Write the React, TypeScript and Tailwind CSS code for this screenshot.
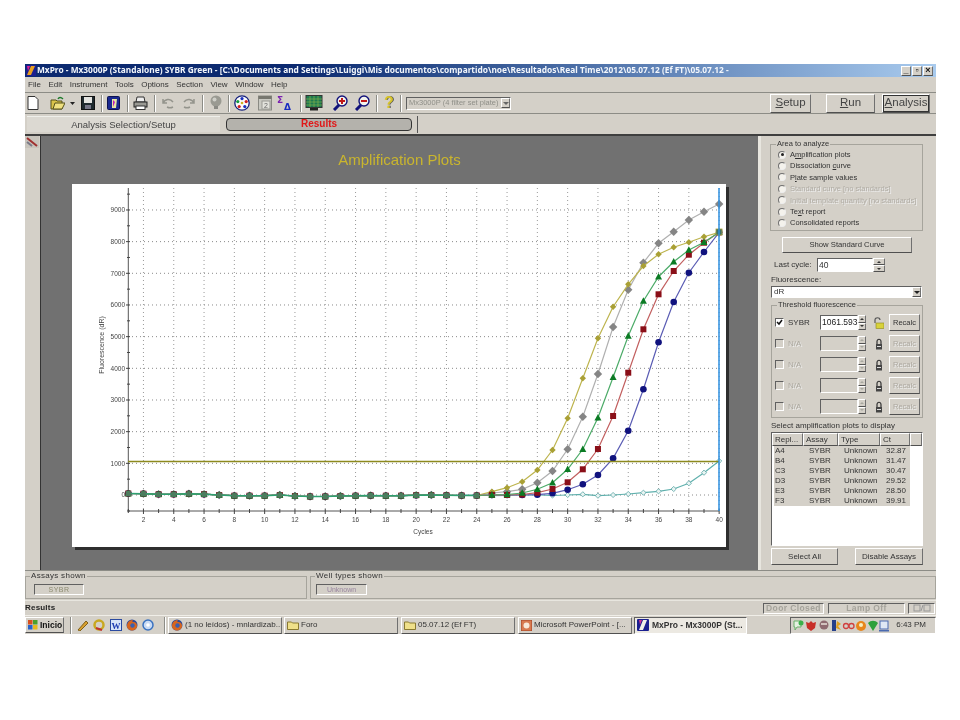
import React from "react";

const bevel = "border border-t-white border-l-white border-r-[#707070] border-b-[#505050]";
const sunken = "border border-t-[#606060] border-l-[#606060] border-r-white border-b-white";

const base = [493.5,493.7,494.3,494.3,493.8,494.2,495,495.7,495.7,495.7,495,496,496.5,496.5,496,495.7,495.5,495.7,495.7,495.2,495,495.3,495.5,495.5];
const series = [
  { k: "teal", line: "#5fb0ad", fill: "#e8f4f2", stroke: "#5aa5a5", m: "open", d: [495.5,495.5,495.2,495,495.7,495.3,495,495,495.5,495,494.3,495.7,495,494,492.7,491.3,489,483.3,472.7,461], from: 21 },
  { k: "gray", line: "#b0b0b0", fill: "#858585", stroke: "#858585", m: "diamond", d: [493,491.7,489.3,482.7,471,449.3,416.7,374,327,289.7,262.7,243.3,231.7,220,211.7,204], from: 25 },
  { k: "olive", line: "#bdb44e", fill: "#a9a035", stroke: "#a9a035", m: "small", d: [491.7,487.7,481.7,470,450,418.3,378.3,338.3,306.7,284.3,266,254.3,247.3,242.3,236.7,232.3], from: 25 },
  { k: "navy", line: "#5a5cb4", fill: "#10127e", stroke: "#10127e", m: "circle", d: [495,495,495,494.7,493.3,489.7,484.3,475,458.3,430.7,389.3,342.3,302,272.7,252,232.3], from: 25 },
  { k: "red", line: "#c25f5f", fill: "#8a0f18", stroke: "#8a0f18", m: "square", d: [495,495,494.5,492.7,489,482.3,469.3,449,416,372.7,329.3,294.3,271,254.7,242.7,232.3], from: 25 },
  { k: "green", line: "#4cab68", fill: "#0b7b24", stroke: "#0b7b24", m: "tri", d: [495,494.5,493,489.3,482.7,469.3,449.3,417.7,377.3,336,301,276.7,261.7,250,242.3,232.3], from: 25 },
];
const cx = (c: number) => 128.3 + (c - 1) * 15.15;
const yOf = (v: number) => 495 - v * 0.03167;

function Marker({ kind, x, y, fill, stroke }: { kind: string; x: number; y: number; fill: string; stroke: string }) {
  if (kind === "diamond") return <polygon points={`${x},${y - 4.2} ${x + 4.2},${y} ${x},${y + 4.2} ${x - 4.2},${y}`} fill={fill} />;
  if (kind === "small") return <polygon points={`${x},${y - 3.2} ${x + 3.2},${y} ${x},${y + 3.2} ${x - 3.2},${y}`} fill={fill} />;
  if (kind === "circle") return <circle cx={x} cy={y} r={3.3} fill={fill} />;
  if (kind === "square") return <rect x={x - 3} y={y - 3} width={6} height={6} fill={fill} />;
  if (kind === "tri") return <polygon points={`${x},${y - 3.8} ${x + 3.5},${y + 2.7} ${x - 3.5},${y + 2.7}`} fill={fill} />;
  return <polygon points={`${x},${y - 2.6} ${x + 2.6},${y} ${x},${y + 2.6} ${x - 2.6},${y}`} fill={fill} stroke={stroke} strokeWidth={0.8} />;
}

function Chart() {
  const ticksY = [0, 1000, 2000, 3000, 4000, 5000, 6000, 7000, 8000, 9000];
  const evens = Array.from({ length: 20 }, (_, i) => (i + 1) * 2);
  const all = Array.from({ length: 40 }, (_, i) => i + 1);
  const dotStyle = { font: "6.5px 'Liberation Sans', sans-serif" };
  return (
    <svg viewBox="72 184 654 363" width={654} height={363} className="block bg-white">
      {evens.map((c) => (
        <line key={c} x1={cx(c)} x2={cx(c)} y1={188} y2={511} stroke="#9a9a9a" strokeWidth={1} strokeDasharray="1 3" />
      ))}
      {ticksY.map((v) => (
        <line key={v} x1={128} x2={719} y1={yOf(v)} y2={yOf(v)} stroke="#8a8a8a" strokeWidth={1} strokeDasharray="1 3" />
      ))}
      <line x1={128.3} x2={128.3} y1={188} y2={511} stroke="#555" strokeWidth={1} />
      <line x1={128} x2={719} y1={511} y2={511} stroke="#555" strokeWidth={1} />
      {all.map((c) => (
        <line key={c} x1={cx(c)} x2={cx(c)} y1={509} y2={c % 2 === 0 ? 514 : 513} stroke="#444" strokeWidth={1} />
      ))}
      {Array.from({ length: 20 }, (_, i) => i).map((i) => (
        <line key={i} x1={i % 2 === 0 ? 126 : 127} x2={130} y1={495 - i * 15.835} y2={495 - i * 15.835} stroke="#444" strokeWidth={1} />
      ))}
      <line x1={127} x2={130} y1={511} y2={511} stroke="#444" strokeWidth={1} />
      {ticksY.map((v) => (
        <text key={v} x={125} y={yOf(v) + 2.3} textAnchor="end" fill="#444" style={dotStyle}>{v}</text>
      ))}
      {evens.map((c) => (
        <text key={c} x={cx(c)} y={522} textAnchor="middle" fill="#444" style={dotStyle}>{c}</text>
      ))}
      <text x={423} y={534} textAnchor="middle" fill="#444" style={dotStyle}>Cycles</text>
      <text transform="rotate(-90 104 345)" x={104} y={345} textAnchor="middle" fill="#444" style={{ font: "7px 'Liberation Sans', sans-serif" }}>Fluorescence (dR)</text>
      {series.map((s) => {
        const head = base.slice(0, s.from - 1);
        const ys = [...head, ...s.d];
        return (
          <g key={s.k}>
            <polyline points={ys.map((y, i) => `${cx(i + 1)},${y}`).join(" ")} fill="none" stroke={s.line} strokeWidth={1.2} />
            {ys.map((y, i) => (
              <Marker key={i} kind={s.m} x={cx(i + 1)} y={y} fill={s.fill} stroke={s.stroke} />
            ))}
          </g>
        );
      })}
      <polyline points={base.map((y, i) => `${cx(i + 1)},${y}`).join(" ")} fill="none" stroke="#2fa070" strokeWidth={1.6} />
      {base.map((y, i) => (
        <rect key={i} x={cx(i + 1) - 2.6} y={y - 2.6} width={5.2} height={5.2} fill="#4d7c5e" />
      ))}
      <line x1={128} x2={719} y1={461.5} y2={461.5} stroke="#8d8a1e" strokeWidth={1.5} />
      <rect x={716} y={229} width={6} height={6} fill="#3d6f6a" stroke="#a9a035" strokeWidth={0.8} />
      <line x1={719} x2={719} y1={188} y2={511} stroke="#2c8fe0" strokeWidth={1.5} />
    </svg>
  );
}

const Ic = ({ w = 14, h = 14, cls = "", vb, children }: { w?: number; h?: number; cls?: string; vb?: string; children: React.ReactNode }) => (
  <svg width={w} height={h} viewBox={vb || `0 0 ${w} ${h}`} className={"shrink-0 " + cls}>{children}</svg>
);

function Magnifier({ minus, cls }: { minus?: boolean; cls: string }) {
  return (
    <Ic w={16} h={16} cls={cls}>
      <line x1={8} y1={9} x2={2} y2={15} stroke="#12127a" strokeWidth={3} />
      <circle cx={10} cy={6} r={5} fill="#f4f4ee" stroke="#12127a" strokeWidth={1.4} />
      <rect x={7} y={5} width={6} height={2} fill="#c01818" />
      {!minus && <rect x={9} y={3} width={2} height={6} fill="#c01818" />}
    </Ic>
  );
}

const Sep = ({ cls }: { cls: string }) => <div className={"w-[2px] h-[17px] shrink-0 border-l border-l-[#8c8c86] border-r border-r-white " + cls} />;

function Toolbar() {
  return (
    <div className="h-[22px] flex items-center border-t border-t-[#8c8c86] border-b border-b-[#8c8c86]">
      <Ic w={12} h={14} cls="ml-[2px]"><path d="M1 .5h7l3 3v10H1z" fill="#fff" stroke="#333" /></Ic>
      <Ic w={15} h={14} cls="ml-[11px]">
        <path d="M1 4h5l1 1h5v8H1z" fill="#d8c24a" stroke="#55501a" />
        <path d="M3 13l2-6h10l-3 6z" fill="#efe080" stroke="#55501a" />
        <path d="M8 3c1-2 3-2 5 0" fill="none" stroke="#1d7a2a" strokeWidth={1.4} />
      </Ic>
      <Ic w={5} h={3} cls="ml-[5px]"><path d="M0 0h5L2.5 3z" fill="#222" /></Ic>
      <Ic w={14} h={14} cls="ml-[6px]">
        <rect x={.5} y={.5} width={13} height={13} fill="#1f2a2e" stroke="#111" />
        <rect x={3} y={1} width={8} height={6} fill="#e4e4e0" />
        <rect x={4} y={9} width={6} height={4} fill="#778" />
      </Ic>
      <Sep cls="ml-[6px]" />
      <Ic w={13} h={14} cls="ml-[4px]">
        <rect x={.5} y={.5} width={12} height={13} rx={1} fill="#1b2a90" stroke="#0c1250" />
        <path d="M5 3h5l-1 9H5z" fill="#e8e8a0" />
        <path d="M6 4l2 2-2 5z" fill="#c020c0" />
      </Ic>
      <Sep cls="ml-[7px]" />
      <Ic w={15} h={14} cls="ml-[4px]">
        <path d="M4 1h7l1 5H3z" fill="#eee" stroke="#333" />
        <rect x={1} y={6} width={13} height={5} fill="#9a9a94" stroke="#222" />
        <rect x={3} y={10} width={9} height={3.5} fill="#fff" stroke="#333" />
      </Ic>
      <Sep cls="ml-[6px]" />
      <Ic w={13} h={12} cls="ml-[5px]"><path d="M2 6c2-4 7-5 10-1M2 2v4h4M12 10c-2 1-4 1-6 0" fill="none" stroke="#94948c" strokeWidth={1.5} /></Ic>
      <Ic w={13} h={12} cls="ml-[9px]"><path d="M11 6C9 2 4 1 1 5M11 2v4H7M1 10c2 1 4 1 6 0" fill="none" stroke="#94948c" strokeWidth={1.5} /></Ic>
      <Sep cls="ml-[6px]" />
      <Ic w={14} h={16} cls="ml-[5px]">
        <circle cx={7} cy={6} r={5.5} fill="#9a9a92" />
        <circle cx={5.5} cy={4.5} r={2} fill="#cfcfc8" />
        <rect x={5} y={11} width={4} height={3} fill="#8a8a84" />
      </Ic>
      <Sep cls="ml-[5px]" />
      <Ic w={16} h={16} cls="ml-[4px]">
        <circle cx={8} cy={8} r={7.2} fill="#fafafa" stroke="#15207c" strokeWidth={1.3} />
        <circle cx={8} cy={3.6} r={1.6} fill="#1a30c0" />
        <circle cx={3.8} cy={6.6} r={1.6} fill="#129a40" />
        <circle cx={12.2} cy={6.6} r={1.6} fill="#d02020" />
        <circle cx={5.2} cy={11.6} r={1.6} fill="#d02020" />
        <circle cx={10.8} cy={11.6} r={1.6} fill="#1a30c0" />
        <circle cx={8} cy={8} r={1.3} fill="#d0b020" />
      </Ic>
      <Ic w={14} h={16} cls="ml-[8px]">
        <rect x={.5} y={1} width={13} height={14} fill="#c9c9c2" stroke="#8a8a84" />
        <rect x={.5} y={1} width={13} height={3} fill="#77776f" />
        <rect x={4} y={6} width={8} height={8} fill="#e2e2dc" stroke="#9a9a94" />
        <text x={8} y={13} textAnchor="middle" fill="#666" style={{ font: "7px 'Liberation Sans', sans-serif" }}>2</text>
      </Ic>
      <Ic w={18} h={18} cls="ml-[5px]">
        <text x={0} y={9} fill="#7a1fb0" style={{ font: "bold 9px 'DejaVu Sans', sans-serif" }}>Σ</text>
        <text x={7} y={16} fill="#1a2ec0" style={{ font: "bold 9px 'DejaVu Sans', sans-serif" }}>Δ</text>
      </Ic>
      <Sep cls="ml-[5px]" />
      <Ic w={18} h={16} cls="ml-[3px]">
        <rect x={1} y={.5} width={16} height={12} fill="#1e7a50" stroke="#333" />
        <path d="M1 4h16M1 7h16M1 10h16M5 1v11M9 1v11M13 1v11" stroke="#7fb04a" strokeWidth={.7} />
        <rect x={5} y={13} width={8} height={2.5} fill="#222" />
      </Ic>
      <Magnifier cls="ml-[9px]" />
      <Magnifier minus cls="ml-[6px]" />
      <Sep cls="ml-[6px]" />
      <span className="ml-[6px] w-[10px] shrink-0 text-[16px] leading-[16px] font-bold text-[#d8c428] font-['Liberation_Sans',sans-serif] [text-shadow:1px_0_0_#555]">?</span>
      <Sep cls="ml-[6px]" />
      <div className={"ml-[4px] w-[105px] h-[13px] shrink-0 flex items-center justify-between text-[7.5px] leading-none text-[#8f8f88] " + sunken}>
        <span className="pl-[2px] whitespace-nowrap">Mx3000P (4 filter set plate)</span>
        <span className={"w-[9px] h-[10px] flex items-center justify-center " + bevel}><span className="block w-0 h-0 border-x-[3px] border-x-transparent border-t-[3px] border-t-[#666]" /></span>
      </div>
      <button className={"ml-auto w-[41px] h-[19px] text-[11.5px] leading-none text-[#444] " + bevel}><u>S</u>etup</button>
      <button className={"ml-[15px] w-[49px] h-[19px] text-[11.5px] leading-none text-[#444] " + bevel}><u>R</u>un</button>
      <button className={"ml-[7px] mr-[6px] w-[48px] h-[19px] text-[11.5px] leading-none text-[#444] outline outline-[#333] -outline-offset-2 " + bevel}><u>A</u>nalysis</button>
    </div>
  );
}

function Radio({ label, on, off, u }: { label: string; on?: boolean; off?: boolean; u?: number }) {
  const pre = u !== undefined ? label.slice(0, u) : label;
  const mid = u !== undefined ? label.slice(u, u + 1) : "";
  const post = u !== undefined ? label.slice(u + 1) : "";
  return (
    <div className={"h-[11.4px] flex items-center pl-[7px] leading-none whitespace-nowrap " + (off ? "text-[#b0aca4] [text-shadow:1px_1px_0_#eee]" : "text-[#333]")}>
      <span className="w-[8px] h-[8px] rounded-full bg-[#f4f2ec] border border-t-[#707070] border-l-[#707070] border-r-[#eee] border-b-[#eee] flex items-center justify-center shrink-0">
        {on && <span className="block w-[3px] h-[3px] rounded-full bg-[#222]" />}
      </span>
      <span className="ml-[4px]">{pre}<u>{mid}</u>{post}</span>
    </div>
  );
}

function Spin({ dim, cls }: { dim?: boolean; cls: string }) {
  const c = dim ? "border-b-[#a8a8a0]" : "border-b-[#333]";
  const d = dim ? "border-t-[#a8a8a0]" : "border-t-[#333]";
  return (
    <div className={"flex flex-col shrink-0 " + cls}>
      <div className={"flex-1 flex items-center justify-center " + bevel}><span className={"block w-0 h-0 border-x-2 border-x-transparent border-b-2 " + c} /></div>
      <div className={"flex-1 flex items-center justify-center " + bevel}><span className={"block w-0 h-0 border-x-2 border-x-transparent border-t-2 " + d} /></div>
    </div>
  );
}

function Lock({ open }: { open?: boolean }) {
  return (
    <Ic w={10} h={12} cls="ml-[8px]">
      {open ? (
        <>
          <path d="M1 6V3c0-3 5-3 5 0" fill="none" stroke="#555" strokeWidth={1.2} />
          <rect x={2} y={6} width={8} height={5.5} fill="#d8d23a" stroke="#8a8420" strokeWidth={.6} />
        </>
      ) : (
        <>
          <path d="M3 6V3.5c0-3 4-3 4 0V6" fill="none" stroke="#333" strokeWidth={1.2} />
          <rect x={2} y={6} width={6} height={5.5} fill="#444" />
          <rect x={3} y={8} width={4} height={1} fill="#ddd" />
        </>
      )}
    </Ic>
  );
}

function Thresh({ label, value, active }: { label: string; value?: string; active?: boolean }) {
  const txt = active ? "text-[#333]" : "text-[#aca89f] [text-shadow:1px_1px_0_#eee]";
  return (
    <div className="h-[21px] flex items-center pl-[3px] leading-none">
      <span className={"w-[9px] h-[9px] shrink-0 flex items-center justify-center " + sunken + " " + (active ? "bg-white" : "bg-[#d4d0c8]")}>
        {active && <svg width={7} height={7} viewBox="0 0 7 7"><path d="M1 3l2 2 3-4" fill="none" stroke="#111" strokeWidth={1.5} /></svg>}
      </span>
      <span className={"ml-[4px] w-[32px] shrink-0 text-[8px] " + txt}>{label}</span>
      <div className={"w-[38px] h-[15px] shrink-0 flex items-center pl-[1px] text-[8.5px] text-[#222] " + sunken + " " + (active ? "bg-white" : "bg-[#d4d0c8]")}>{value}</div>
      <Spin dim={!active} cls="w-[8px] h-[15px]" />
      <Lock open={active} />
      <button className={"ml-[5px] w-[31px] h-[17px] shrink-0 text-[7.5px] " + bevel + " " + txt}>Recalc</button>
    </div>
  );
}

const rows = [
  ["A4", "32.87"],
  ["B4", "31.47"],
  ["C3", "30.47"],
  ["D3", "29.52"],
  ["E3", "28.50"],
  ["F3", "39.91"],
];

function SidePanel() {
  return (
    <div className="w-[178px] shrink-0 border-l-[3px] border-l-[#e8e6df] pl-[9px] pt-[3px] text-[#333] text-[7.5px] leading-none">
      <fieldset className="w-[153px] min-w-0 h-[92px] border border-[#a6a49c]">
        <legend className="ml-[5px] px-[1px] h-[10px] leading-[10px]">Area to analyze</legend>
        <Radio label="Amplification plots" on u={1} />
        <Radio label="Dissociation curve" u={13} />
        <Radio label="Plate sample values" u={1} />
        <Radio label="Standard curve [no standards]" off />
        <Radio label="Initial template quantity [no standards]" off />
        <Radio label="Text report" u={2} />
        <Radio label="Consolidated reports" />
      </fieldset>
      <button className={"block ml-[12px] mt-[6px] w-[130px] h-[16px] text-[7.7px] " + bevel}>Show Standard Curve</button>
      <div className="mt-[5px] h-[14px] flex items-center pl-[4px] text-[8px]">
        <span className="w-[43px] shrink-0">Last cycle:</span>
        <div className={"w-[56px] h-[14px] bg-white flex items-center pl-[1px] text-[8.5px] " + sunken}>40</div>
        <Spin cls="w-[12px] h-[14px]" />
      </div>
      <div className="mt-[2px] h-[11px] flex items-center pl-[1px] text-[8px]">Fluorescence:</div>
      <div className={"mt-[1px] ml-[1px] w-[151px] h-[12px] bg-white flex items-center justify-between pl-[2px] text-[8px] " + sunken}>
        dR
        <span className={"w-[9px] h-[10px] bg-[#d4d0c8] flex items-center justify-center " + bevel}><span className="block w-0 h-0 border-x-[3px] border-x-transparent border-t-[3px] border-t-[#222]" /></span>
      </div>
      <fieldset className="mt-[2px] ml-[1px] w-[152px] min-w-0 h-[118px] border border-[#a6a49c]">
        <legend className="ml-[5px] px-[1px] h-[10px] leading-[10px]">Threshold fluorescence</legend>
        <div className="pt-[2px]">
          <Thresh label="SYBR" value="1061.593" active />
          <Thresh label="N/A" />
          <Thresh label="N/A" />
          <Thresh label="N/A" />
          <Thresh label="N/A" />
        </div>
      </fieldset>
      <div className="mt-[2px] h-[11px] flex items-center pl-[1px] whitespace-nowrap text-[8px]">Select amplification plots to display</div>
      <div className={"mt-[1px] ml-[1px] w-[152px] h-[114px] bg-white overflow-hidden text-[8px] " + sunken}>
        <div className="h-[13px] flex bg-[#d4d0c8]">
          {[["Repl...", "w-[31px]"], ["Assay", "w-[35px]"], ["Type", "w-[42px]"], ["Ct", "w-[30px]"], ["", "flex-1"]].map(([t, w]) => (
            <div key={t} className={"flex items-center pl-[2px] " + w + " " + bevel}>{t}</div>
          ))}
        </div>
        <div className="ml-[2px] w-[136px]">
          {rows.map(([a, ct]) => (
            <div key={a} className="h-[10px] flex items-center pl-[1px] bg-[#d4d0c8]">
              <span className="w-[34px]">{a}</span>
              <span className="w-[35px]">SYBR</span>
              <span className="w-[42px]">Unknown</span>
              <span>{ct}</span>
            </div>
          ))}
        </div>
      </div>
      <div className="mt-[2px] ml-[1px] w-[152px] flex justify-between text-[8px]">
        <button className={"w-[67px] h-[17px] " + bevel}>Select All</button>
        <button className={"w-[68px] h-[17px] " + bevel}>Disable Assays</button>
      </div>
    </div>
  );
}

function Fox({ cls = "" }: { cls?: string }) {
  return (
    <Ic w={12} h={12} cls={cls}>
      <circle cx={6} cy={6} r={5.5} fill="#2c4a9a" />
      <path d="M1 7c0-4 3-6 6-6-1 1-1 2 0 2 3 0 4 2 4 4 0 3-3 4.500-5 4.500S1 10 1 7z" fill="#d8661e" />
      <circle cx={6.500} cy={6.500} r={2.200} fill="#3a5fb0" />
    </Ic>
  );
}

function Folder() {
  return (
    <Ic w={12} h={10} cls="mr-[2px]">
      <path d="M.5 2h4l1 1h6v6.500h-11z" fill="#efe08a" stroke="#8a7a30" />
    </Ic>
  );
}

function Task({ w, ml, active, icon, children }: { w: string; ml: string; active?: boolean; icon: React.ReactNode; children: React.ReactNode }) {
  return (
    <div className={"h-[17px] flex items-center pl-[2px] shrink-0 overflow-hidden whitespace-nowrap leading-none text-[#333] " + w + " " + ml + " " + (active ? sunken + " font-bold text-[8.5px] bg-[#ece9e2] text-[#111]" : bevel + " text-[8px]")}>
      {icon}
      {children}
    </div>
  );
}

function Tray() {
  return (
    <Ic w={96} h={13}>
      <path d="M1 2h7v6H4l-2 3V8H1z" fill="#e4f0e0" stroke="#6ab06a" />
      <circle cx={8} cy={4} r={2.500} fill="#3cb04a" />
      <path d="M13 3l3 1 2-2 2 2 3-1-1 6-4 3-4-3z" fill="#c8302a" />
      <circle cx={31} cy={6} r={4.500} fill="#8f6a70" />
      <path d="M28 5h6" stroke="#e8e0d8" strokeWidth={1.500} />
      <rect x={39} y={1} width={4} height={11} fill="#26408a" />
      <path d="M44 2l4 3-3 2 3 4-5-2z" fill="#e0a020" />
      <circle cx={53} cy={7} r={2.500} fill="none" stroke="#d04040" strokeWidth={1.300} />
      <circle cx={58.500} cy={7} r={2.500} fill="none" stroke="#d04040" strokeWidth={1.300} />
      <circle cx={68} cy={7} r={5} fill="#e8861c" />
      <circle cx={68} cy={6} r={2} fill="#f8f0c0" />
      <path d="M75 4c3-3 7-3 10 0l-5 8z" fill="#2da03a" />
      <rect x={87} y={2} width={8} height={8} fill="#dfe8f4" stroke="#4a6ab0" />
      <rect x={86} y={11} width={10} height={1.500} fill="#4a6ab0" />
    </Ic>
  );
}

export default function App() {
  return (
    <div className="w-[960px] h-[720px] bg-white pt-[64px] pl-[25px] overflow-hidden blur-[0.45px] font-['Liberation_Sans',sans-serif]">
      <div className="w-[911px] h-[570px] flex flex-col bg-[#d4d0c8] text-[#333]">
        <div className="h-[13px] flex items-center bg-gradient-to-r from-[#0c2a70] from-30% to-[#a9cbee] pl-[1px] overflow-hidden">
          <Ic w={10} h={11}>
            <rect width={10} height={11} fill="#1a1f90" />
            <path d="M1 10L5 1h4L5 10z" fill="#e8a020" />
            <path d="M1 1h3L2 6z" fill="#e02090" />
          </Ic>
          <span className="ml-[1px] text-[8.35px] font-bold leading-none text-[#f2f6fb] whitespace-nowrap font-['Noto_Sans',sans-serif]">MxPro - Mx3000P (Standalone) SYBR Green - [C:\Documents and Settings\Luiggi\Mis documentos\compartido\noe\Resultados\Real Time\2012\05.07.12 (Ef FT)\05.07.12 -</span>
          <div className="ml-auto mr-[3px] flex gap-[1px] shrink-0">
            {["_", "▫", "×"].map((t, i) => (
              <span key={i} className={"w-[10px] h-[10px] flex items-center justify-center bg-[#d4d0c8] text-[9px] font-bold leading-none text-[#111] " + bevel}>{t}</span>
            ))}
          </div>
        </div>
        <div className="h-[15px] flex items-center pl-[3px] gap-[7.5px] text-[8px] leading-none text-[#333]">
          {["File", "Edit", "Instrument", "Tools", "Options", "Section", "View", "Window", "Help"].map((m) => (
            <span key={m}>{m}</span>
          ))}
        </div>
        <Toolbar />
        <div className="h-[20px] flex items-center pl-[2px]">
          <div className="w-[193px] h-[16px] bg-[#dcd9d2] border-t border-t-[#efefea] flex items-center justify-center text-[9.5px] leading-none text-[#444]">Analysis Selection/Setup</div>
          <div className="ml-[6px] w-[186px] h-[13px] rounded-[4px] border border-[#333] bg-[#b4b2ac] flex items-center justify-center text-[10px] font-bold leading-none text-[#e01818]">Results</div>
          <div className="ml-[5px] w-[1px] h-[17px] bg-[#555]" />
        </div>
        <div className="h-[436px] flex border-t-2 border-t-[#3f3f3f]">
          <div className="w-[15px] shrink-0 bg-[#d4d0c8]">
            <Ic w={14} h={12}>
              <rect width={14} height={12} fill="#c8c4bc" />
              <path d="M2 2l10 8" stroke="#a03030" strokeWidth={2} />
              <path d="M2 6l5 4" stroke="#7a7a88" strokeWidth={2} />
            </Ic>
          </div>
          <div className="w-[718px] shrink-0 bg-[#717171] border-l border-l-[#333]">
            <div className="pt-[15px] h-[33px] text-center text-[15px] leading-[18px] text-[#c9b52e]">Amplification Plots</div>
            <div className="mt-[15px] ml-[31px] w-[654px] h-[363px] shadow-[3px_3px_0_#2e2e2e]">
              <Chart />
            </div>
          </div>
          <SidePanel />
        </div>
        <div className="h-[30px] flex border-t border-t-[#8c8c86] text-[8px] leading-none">
          <fieldset className="w-[282px] min-w-0 h-[28px] border border-[#a6a49c]">
            <legend className="ml-[4px] px-[1px] h-[10px] leading-[10px] tracking-[0.3px]">Assays shown</legend>
            <div className={"mt-[3px] ml-[8px] w-[50px] h-[11px] flex items-center justify-center text-[7px] tracking-[0.5px] text-[#8d8b70] " + sunken}>SYBR</div>
          </fieldset>
          <fieldset className="ml-[3px] w-[626px] min-w-0 h-[28px] border border-[#a6a49c]">
            <legend className="ml-[4px] px-[1px] h-[10px] leading-[10px] tracking-[0.3px]">Well types shown</legend>
            <div className={"mt-[3px] ml-[5px] w-[51px] h-[11px] flex items-center justify-center text-[7px] text-[#9a87a0] " + sunken}>Unknown</div>
          </fieldset>
        </div>
        <div className="h-[15px] flex items-center border-t border-t-[#e8e6df]">
          <span className="text-[8px] font-bold tracking-[0.2px] text-[#222]">Results</span>
          <div className="ml-auto flex items-center text-[8.5px] font-bold tracking-[0.4px] leading-none whitespace-nowrap text-[#a5a39b]">
            <span className={"w-[61px] h-[11px] flex items-center justify-center " + sunken}>Door Closed</span>
            <span className={"ml-[4px] w-[77px] h-[11px] flex items-center justify-center " + sunken}>Lamp Off</span>
            <span className={"ml-[3px] mr-[1px] w-[27px] h-[11px] flex items-center justify-center " + sunken}>
              <Ic w={18} h={8}><rect x={1} y={1} width={6} height={6} fill="none" stroke="#999" /><path d="M8 7l2-6" stroke="#999" /><rect x={11} y={1} width={6} height={6} fill="none" stroke="#999" /></Ic>
            </span>
          </div>
        </div>
        <div className="h-[19px] flex items-center border-t border-t-[#f0eee8]">
          <div className={"w-[39px] h-[16px] flex items-center pl-[2px] shrink-0 text-[8.5px] font-bold leading-none text-[#111] " + bevel}>
            <Ic w={10} h={10} cls="mr-[2px]">
              <rect width={4.500} height={4.500} fill="#d8501e" />
              <rect x={5} width={4.500} height={4.500} fill="#4aa02c" />
              <rect y={5} width={4.500} height={4.500} fill="#2a62c8" />
              <rect x={5} y={5} width={4.500} height={4.500} fill="#e8b81e" />
            </Ic>
            Inicio
          </div>
          <Sep cls="ml-[6px]" />
          <Ic w={12} h={12} cls="ml-[5px]"><path d="M1 11L9 2l2 2-8 8z" fill="#d8a030" stroke="#806018" /></Ic>
          <Ic w={12} h={12} cls="ml-[4px]"><circle cx={6} cy={6} r={4.500} fill="none" stroke="#c8a820" strokeWidth={2.500} /><path d="M3 9l6 2" stroke="#c03030" strokeWidth={2} /></Ic>
          <Ic w={12} h={12} cls="ml-[5px]"><rect x={.5} y={.5} width={11} height={11} fill="#d8e4f8" stroke="#2a4aa0" /><text x={6} y={9.500} textAnchor="middle" fill="#1a3ab0" style={{ font: "bold 9px 'Liberation Serif', serif" }}>W</text></Ic>
          <Fox cls="ml-[4px]" />
          <Ic w={12} h={12} cls="ml-[4px]"><circle cx={6} cy={6} r={5} fill="#c8daf4" stroke="#3a72c0" strokeWidth={1.500} /><circle cx={6} cy={6} r={1.800} fill="#fff" /></Ic>
          <Sep cls="ml-[10px]" />
          <Task w="w-[114px]" ml="ml-[2px]" icon={<Fox cls="mr-[2px]" />}>(1 no leídos) - mnlardizab...</Task>
          <Task w="w-[114px]" ml="ml-[2px]" icon={<Folder />}>Foro</Task>
          <Task w="w-[114px]" ml="ml-[3px]" icon={<Folder />}>05.07.12 (Ef FT)</Task>
          <Task w="w-[114px]" ml="ml-[3px]" icon={<Ic w={11} h={11} cls="mr-[2px]"><rect width={11} height={11} fill="#d87a50" stroke="#a04020" /><circle cx={5.500} cy={5.500} r={3} fill="#f8e8d8" /></Ic>}>Microsoft PowerPoint - [...</Task>
          <Task w="w-[113px]" ml="ml-[2px]" active icon={<Ic w={12} h={12} cls="mr-[3px]"><rect width={12} height={12} rx={1} fill="#1a1f90" /><path d="M2 11L6 1h4L6 11z" fill="#f0f0e8" /><path d="M2 1h3L3 6z" fill="#d03090" /></Ic>}>MxPro - Mx3000P (St...</Task>
          <div className={"ml-[43px] w-[146px] h-[17px] flex items-center pl-[2px] shrink-0 text-[8px] leading-none " + sunken}>
            <Tray />
            <span className="ml-auto mr-[9px]">6:43 PM</span>
          </div>
        </div>
      </div>
    </div>
  );
}
